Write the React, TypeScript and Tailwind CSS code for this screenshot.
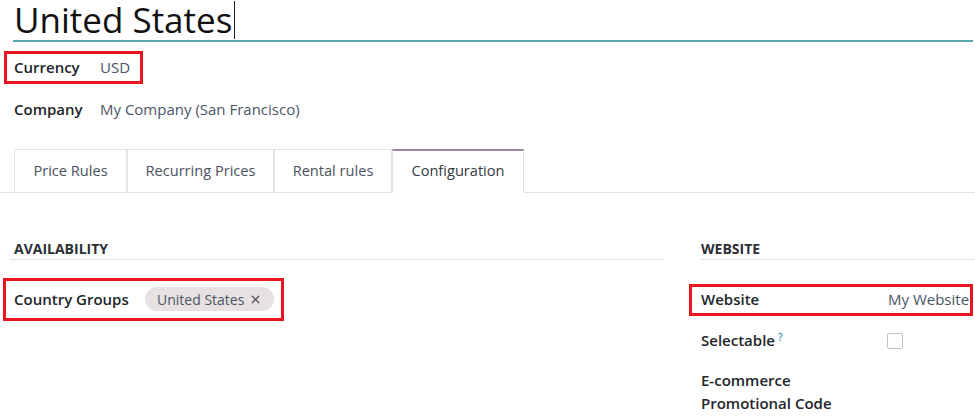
import { X } from 'lucide-react'

const font = { fontFamily: '"Open Sans", "Noto Sans", sans-serif' }

function Tab({ label, width, active }: { label: string; width: string; active?: boolean }) {
  return (
    <div
      className={`${width} -mb-px flex h-[44px] items-center justify-center border-x border-t text-[14.6px] ${
        active
          ? 'border-x-[#dee2e6] border-t-2 border-t-[#9d879a] bg-white text-[#343a40] border-b border-b-white'
          : 'border-[#e2e4e8] text-[#4b5260]'
      }`}
    >
      {label}
    </div>
  )
}

export default function App() {
  return (
    <div style={font} className="relative h-[420px] w-[975px] overflow-hidden bg-white text-[#212529]">
      {/* record name */}
      <div className="ml-[13px] mr-[2px] flex h-[42px] items-end border-b-2 border-[#5aa7ae]">
        <h1 className="pl-[1px] text-[35px] leading-[40px] text-[#111]">United States</h1>
        <span className="mb-[1px] ml-[2px] h-[38px] w-px bg-[#222]" />
      </div>

      {/* currency (highlighted) */}
      <div className="ml-[4px] mt-[9px] flex h-[33px] w-[139px] items-center border-[3px] border-[#e8141f] pl-[7px] text-[15px]">
        <span className="w-[86px] font-semibold">Currency</span>
        <span className="text-[#4a5568]">USD</span>
      </div>

      <div className="ml-[14px] mt-[14px] flex text-[15px]">
        <span className="w-[86px] font-semibold">Company</span>
        <span className="text-[#4a5568]">My Company (San Francisco)</span>
      </div>

      {/* notebook tabs */}
      <div className="mt-[28px] flex border-b border-[#dee2e6] pl-[14px]">
        <Tab label="Price Rules" width="w-[113px]" />
        <Tab label="Recurring Prices" width="w-[147px]" />
        <Tab label="Rental rules" width="w-[118px]" />
        <Tab label="Configuration" width="w-[132px]" active />
      </div>

      <div className="flex">
        {/* left group */}
        <div className="ml-[10px] w-[653px]">
          <div className="mt-[46px] border-b border-[#e2e2e2] pl-[4px] text-[14px] font-bold leading-[20px] text-[#2b2f36]">
            AVAILABILITY
          </div>
          <div className="-ml-[7px] mt-[18px] flex h-[43px] w-[281px] items-center border-[3px] border-[#e8141f] pl-[8px] text-[15px]">
            <span className="w-[131px] font-semibold">Country Groups</span>
            <span className="flex h-[24px] items-center gap-[5px] rounded-full bg-[#e7e1e1] pl-[12px] pr-[12px] text-[14px] text-[#4a5568]">
              United States
              <X size={13} strokeWidth={2.5} className="text-[#555]" />
            </span>
          </div>
        </div>

        {/* right group */}
        <div className="ml-[37px] flex-1">
          <div className="mt-[46px] border-b border-[#e2e2e2] pl-[1px] text-[14px] font-bold leading-[20px] text-[#2b2f36]">
            WEBSITE
          </div>
          <div className="-ml-[11px] mt-[24px] flex h-[32px] w-[284px] items-center overflow-hidden border-[3px] border-[#e8141f] pl-[9px] text-[15px]">
            <span className="w-[187px] shrink-0 font-semibold">Website</span>
            <span className="whitespace-nowrap text-[#4a5568]">My Website</span>
          </div>
          <div className="ml-px mt-[15px] flex h-[20px] items-center text-[15px]">
            <span className="w-[186px] font-semibold">
              Selectable<sup className="ml-[3px] text-[10px] text-[#3d8fb0]">?</sup>
            </span>
            <span className="h-[16px] w-[16px] rounded-[2px] border border-[#c4c4c4] bg-white" />
          </div>
          <div className="ml-px mt-[18px] text-[15px] font-semibold leading-[23px]">
            E-commerce
            <br />
            Promotional Code
          </div>
        </div>
      </div>
    </div>
  )
}
